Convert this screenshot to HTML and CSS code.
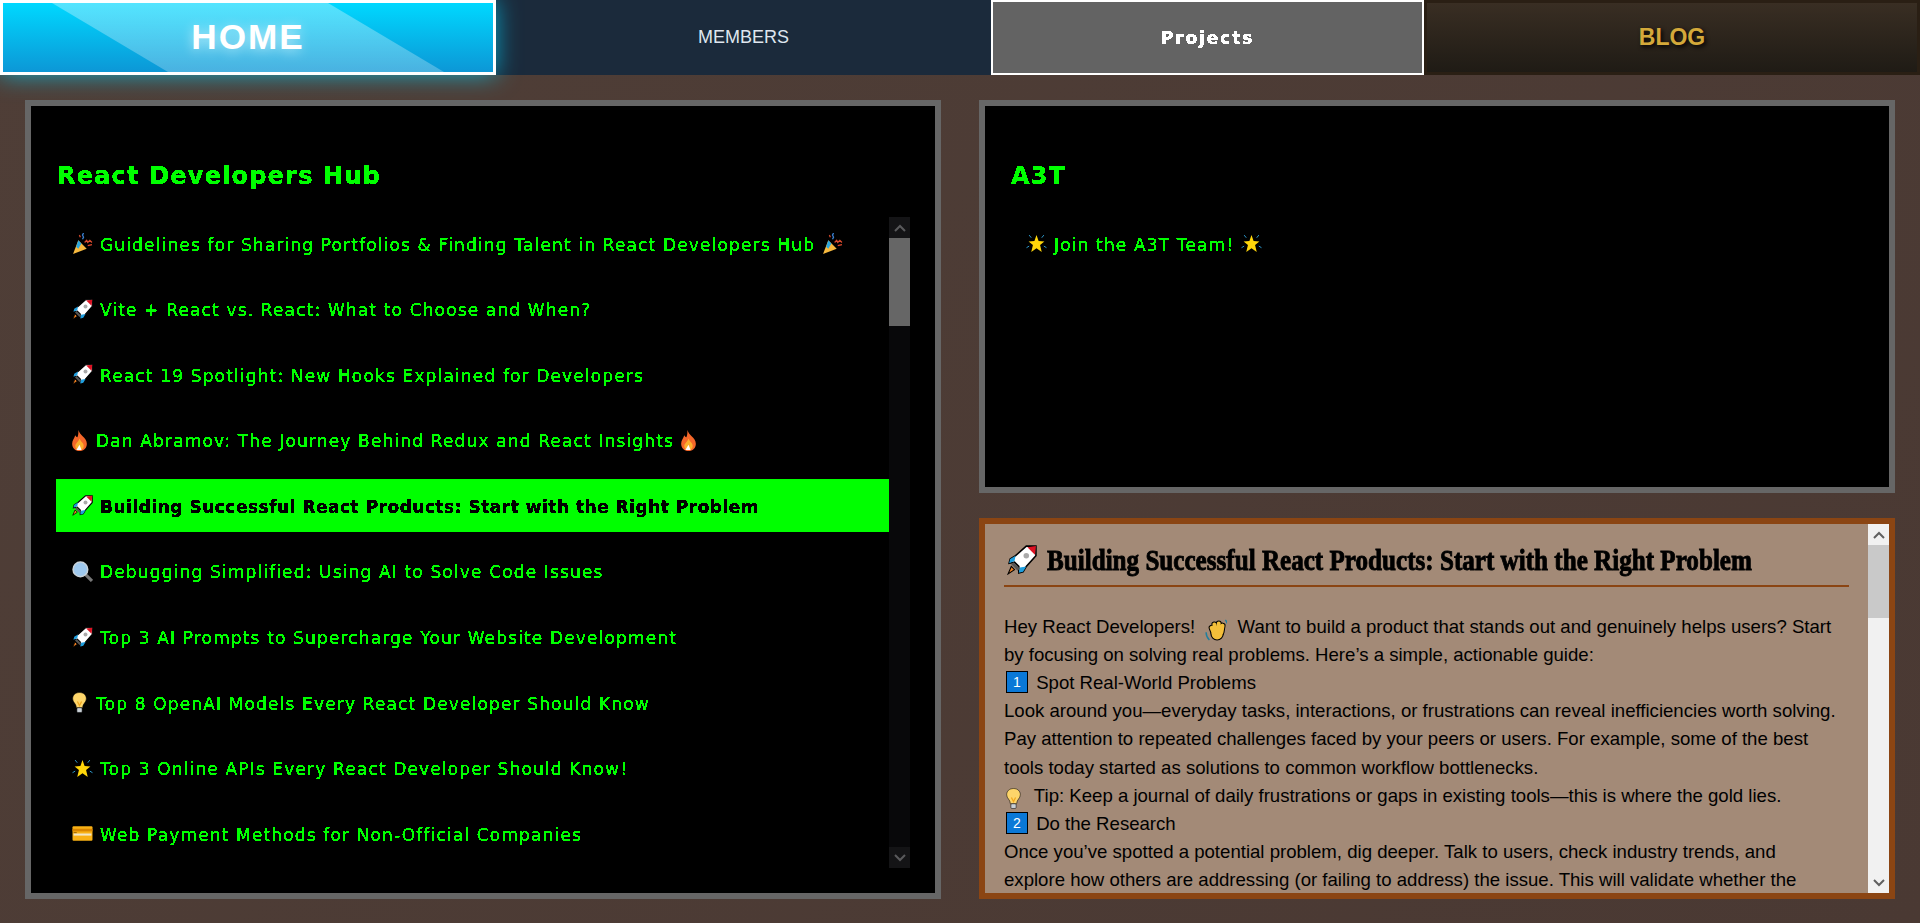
FILE: index.html
```html
<!DOCTYPE html>
<html lang="en">
<head>
    <meta charset="UTF-8">
    <meta name="viewport" content="width=device-width, initial-scale=1.0">
    <title>React Developers Hub</title>
    <link rel="stylesheet" href="styles.css">
</head>
<body>

<svg class="defs" width="0" height="0" aria-hidden="true">
    <filter id="crisp" x="0" y="0" width="100%" height="100%">
        <feComponentTransfer><feFuncA type="discrete" tableValues="0 1 1 1"/></feComponentTransfer>
    </filter>
    <symbol id="rocket" viewBox="1 1 28 28">
        <path d="M28 2 L19 2 L9 11 L4 14 L3 18 L8 17 L12 21 L12 27 L16 26 L19 21 L28 11 Z" fill="#fff" stroke="#000" stroke-width="1.5"/>
        <path d="M28 2 L20 3 L27 10 Z" fill="#dd1122"/>
        <path d="M9 11 L4 14 L3 18 L8 16 Z M19 21 L16 26 L12 27 L13 22 Z" fill="#1e9ede"/>
        <path d="M7 17 L13 23 L11 25 L5 19 Z" fill="#555"/>
        <circle cx="19" cy="11" r="2.6" fill="#aaa"/>
        <path d="M5 21 L8 24 L2 28 Z" fill="#f58220" stroke="#000" stroke-width="1"/>
    </symbol>
    <symbol id="party" viewBox="0 0 20 20">
        <path d="M6 7 L14 15 L1 20 Z" fill="#f7b93e"/>
        <path d="M6 7 L9 10 L6 15 L4 13 Z" fill="#2aa7e0"/>
        <path d="M11 0 L10 2 L11 4 L10 6" stroke="#3b82d6" stroke-width="1.2" fill="none"/>
        <path d="M12 9 L14 7 L15 9 L17 7 L19 9" stroke="#d94a2e" stroke-width="1.2" fill="none"/>
        <path d="M15 12 L19 11 M7 2 L8 4" stroke="#d94a2e" stroke-width="1.2"/>
    </symbol>
    <symbol id="fire" viewBox="3 0 14 20">
        <path d="M9 0 C10 3 11 4 13 6 C15 8 17 10 17 13 C17 17 14 20 10 20 C6 20 3 17 3 13 C3 10 5 8 6 5 C7 7 8 7 8 7 C9 5 9 2 9 0 Z" fill="#f4672a"/>
        <path d="M10 8 C11 11 14 12 14 15 C14 18 12 19 10 19 C8 19 6 18 6 15 C6 13 9 11 10 8 Z" fill="#fbb02d"/>
        <path d="M10 14 L12 19 L7 19 Z" fill="#fff"/>
    </symbol>
    <symbol id="search" viewBox="0 0 20 20">
        <path d="M12 12 L19 19" stroke="#777" stroke-width="3"/>
        <circle cx="8" cy="8" r="7" fill="#9fc9ee" stroke="#c9d3da" stroke-width="1.4"/>
    </symbol>
    <symbol id="bulb" viewBox="3 0 14 20">
        <path d="M10 .5 C14 .5 16.5 3 16.5 6.5 C16.5 10 13 11 13 15 L7 15 C7 11 3.5 10 3.5 6.5 C3.5 3 6 .5 10 .5 Z" fill="#fdd56a" stroke="#000" stroke-width=".5"/>
        <path d="M8 9 L10 13 L12 9" stroke="#f1a81e" stroke-width="1.2" fill="none"/>
        <rect x="7.5" y="15" width="5" height="4.5" rx="1" fill="#c9d0d6" stroke="#000" stroke-width=".5"/>
    </symbol>
    <symbol id="star" viewBox="0 0 20 20">
        <path d="M10 2 L12 7.6 L17.5 8 L13.4 11.4 L15 18 L10 14.6 L5 18 L6.6 11.4 L2.5 8 L8 7.6 Z" fill="#ffd60a"/>
        <path d="M3 2 L5 4.5 M17 2 L15 4.5 M.5 14 L3 12.5 M19.5 14 L17 12.5" stroke="#2f9fd6" stroke-width=".9"/>
    </symbol>
    <symbol id="card" viewBox="0 0 20 20">
        <rect x=".5" y="3" width="19" height="14" rx="1" fill="#f9b115"/>
        <rect x=".5" y="5.5" width="19" height="2.5" fill="#d98500"/>
        <rect x="1.5" y="10" width="17" height="2" fill="#f1e6c8"/>
        <rect x="1.5" y="8.6" width="3" height="1" fill="#a86a00"/>
    </symbol>
    <symbol id="hand" viewBox="0 0 20 20">
        <g fill="none" stroke="#000" stroke-width="5.4" stroke-linecap="round">
            <path d="M8 13 L6 8 M10 12 L8.5 5 M12.5 11 L12.5 4 M15 12 L16 6"/>
        </g>
        <circle cx="11" cy="13.5" r="5.6" fill="#f4bf3a" stroke="#000" stroke-width="1"/>
        <g fill="none" stroke="#f4bf3a" stroke-width="3.6" stroke-linecap="round">
            <path d="M8 13 L6 8 M10 12 L8.5 5 M12.5 11 L12.5 4 M15 12 L16 6"/>
        </g>
        <path d="M1 12 C1 15 2 17 4 19 M18.5 1 C19.5 2 20 3 20 4" stroke="#1f7f9f" stroke-width="1.3" fill="none"/>
    </symbol>
    <symbol id="chev-up" viewBox="0 0 12 8">
        <path d="M1 7 L6 2 L11 7" fill="none" stroke="currentColor" stroke-width="2"/>
    </symbol>
    <symbol id="chev-down" viewBox="0 0 12 8">
        <path d="M1 1 L6 6 L11 1" fill="none" stroke="currentColor" stroke-width="2"/>
    </symbol>
</svg>

<nav class="nav">
    <a class="nav-home">HOME</a>
    <a class="nav-members">MEMBERS</a>
    <a class="nav-projects"><span class="pixel">Projects</span></a>
    <a class="nav-blog">BLOG</a>
</nav>

<main class="layout">
    <section class="terminal panel-left">
        <h2 class="terminal-title"><span class="pixel">React Developers Hub</span></h2>
        <div class="list-wrap">
            <ul class="post-list">
                <li class="post"><svg class="emo"><use href="#party"/></svg><span class="pixel">Guidelines for Sharing Portfolios &amp; Finding Talent in React Developers Hub</span><svg class="emo"><use href="#party"/></svg></li>
                <li class="post"><svg class="emo"><use href="#rocket"/></svg><span class="pixel">Vite + React vs. React: What to Choose and When?</span></li>
                <li class="post"><svg class="emo"><use href="#rocket"/></svg><span class="pixel">React 19 Spotlight: New Hooks Explained for Developers</span></li>
                <li class="post"><svg class="emo emo-narrow"><use href="#fire"/></svg><span class="pixel">Dan Abramov: The Journey Behind Redux and React Insights</span><svg class="emo emo-narrow"><use href="#fire"/></svg></li>
                <li class="post active"><svg class="emo"><use href="#rocket"/></svg><span class="pixel">Building Successful React Products: Start with the Right Problem</span></li>
                <li class="post"><svg class="emo"><use href="#search"/></svg><span class="pixel">Debugging Simplified: Using AI to Solve Code Issues</span></li>
                <li class="post"><svg class="emo"><use href="#rocket"/></svg><span class="pixel">Top 3 AI Prompts to Supercharge Your Website Development</span></li>
                <li class="post"><svg class="emo emo-narrow"><use href="#bulb"/></svg><span class="pixel">Top 8 OpenAI Models Every React Developer Should Know</span></li>
                <li class="post"><svg class="emo"><use href="#star"/></svg><span class="pixel">Top 3 Online APIs Every React Developer Should Know!</span></li>
                <li class="post"><svg class="emo"><use href="#card"/></svg><span class="pixel">Web Payment Methods for Non-Official Companies</span></li>
            </ul>
            <div class="bar bar-dark">
                <span class="bar-btn"><svg class="chev"><use href="#chev-up"/></svg></span>
                <span class="bar-track"><span class="bar-thumb thumb-dark"></span></span>
                <span class="bar-btn"><svg class="chev"><use href="#chev-down"/></svg></span>
            </div>
        </div>
    </section>

    <div class="right-col">
        <section class="terminal panel-top">
            <h2 class="terminal-title"><span class="pixel">A3T</span></h2>
            <ul class="post-list">
                <li class="post"><svg class="emo"><use href="#star"/></svg><span class="pixel">Join the A3T Team!</span><svg class="emo"><use href="#star"/></svg></li>
            </ul>
        </section>

        <section class="article">
            <div class="article-body">
                <h1 class="article-title"><svg class="emo-big"><use href="#rocket"/></svg><span class="article-title-text">Building Successful React Products: Start with the Right Problem</span></h1>
                <p class="article-text">Hey React Developers! <svg class="emo-inline"><use href="#hand"/></svg> Want to build a product that stands out and genuinely helps users? Start<br>
                by focusing on solving real problems. Here’s a simple, actionable guide:<br>
                <span class="keycap">1</span> Spot Real-World Problems<br>
                Look around you—everyday tasks, interactions, or frustrations can reveal inefficiencies worth solving.<br>
                Pay attention to repeated challenges faced by your peers or users. For example, some of the best<br>
                tools today started as solutions to common workflow bottlenecks.<br>
                <svg class="emo-bulb"><use href="#bulb"/></svg> Tip: Keep a journal of daily frustrations or gaps in existing tools—this is where the gold lies.<br>
                <span class="keycap">2</span> Do the Research<br>
                Once you’ve spotted a potential problem, dig deeper. Talk to users, check industry trends, and<br>
                explore how others are addressing (or failing to address) the issue. This will validate whether the</p>
            </div>
            <div class="bar bar-light">
                <span class="bar-btn"><svg class="chev"><use href="#chev-up"/></svg></span>
                <span class="bar-track"><span class="bar-thumb thumb-light"></span></span>
                <span class="bar-btn"><svg class="chev"><use href="#chev-down"/></svg></span>
            </div>
        </section>
    </div>
</main>

</body>
</html>
```

FILE: styles.css
```css
html, body {
    height: 100%;
}
body {
    margin: 0;
    background: linear-gradient(135deg, #4f3e37, #4a3933);
    font-family: "Liberation Sans", Arial, sans-serif;
    overflow: hidden;
}
.defs {
    display: block;
    height: 0;
}
.pixel {
    font-family: "DejaVu Sans", sans-serif;
    filter: url(#crisp);
}

/* top nav */
.nav {
    display: grid;
    grid-template-columns: 496px 495px 433px 496px;
    height: 75px;
}
.nav a {
    display: flex;
    align-items: center;
    justify-content: center;
    box-sizing: border-box;
}
.nav-home {
    position: relative;
    z-index: 2;
    border: 3px solid #fff;
    background: linear-gradient(#00d8ff, #0c97d6);
    box-shadow: 0 0 25px rgba(0, 212, 255, 0.7);
    color: #fff;
    font-size: 35.2px;
    font-weight: bold;
    letter-spacing: 2px;
    padding-bottom: 2px;
    text-shadow: 0 2px 12px rgba(255, 255, 255, 0.6);
}
.nav-home::before {
    content: "";
    position: absolute;
    inset: 0;
    background: linear-gradient(rgba(255, 255, 255, 0.33), rgba(255, 255, 255, 0.25));
    clip-path: polygon(49px 0, 325px 0, 441px 100%, 165px 100%);
}
.nav-members {
    background-color: #1b2a3b;
    color: #dfe6ef;
    font-size: 18px;
}
.nav-projects {
    border: 2px solid #fff;
    background-color: #636363;
    color: #fff;
    font-size: 17px;
    font-weight: bold;
    letter-spacing: 1.9px;
}
.nav-blog {
    border: 3px solid #2a1f14;
    background: linear-gradient(#392e23, #1f1b15);
    color: #d4a93a;
    font-size: 23px;
    font-weight: bold;
    text-shadow: 2px 2px 4px #000;
}

/* panels */
.layout {
    display: grid;
    grid-template-columns: 916px 916px;
    column-gap: 38px;
    padding: 25px 25px 0;
    height: 799px;
}
.terminal {
    box-sizing: border-box;
    display: flex;
    flex-direction: column;
    border: 6px solid #666;
    background-color: #000;
    color: #00ff00;
    padding: 0 25px;
    min-height: 0;
}
.terminal-title {
    margin: 0;
    padding-left: 1px;
    height: 111px;
    line-height: 139px;
    font-size: 24px;
    letter-spacing: 1.2px;
    flex-shrink: 0;
}
.list-wrap {
    display: flex;
    height: 651px;
}
.post-list {
    flex: 1;
    display: flex;
    flex-direction: column;
    gap: 12.6px;
    list-style: none;
    margin: 0;
    padding: 0;
    overflow: hidden;
}
.post {
    display: flex;
    align-items: center;
    gap: 7px;
    flex-shrink: 0;
    box-sizing: border-box;
    height: 53px;
    padding: 2px 0 0 16px;
    font-size: 17px;
    letter-spacing: 1.15px;
    white-space: nowrap;
}
.post.active {
    background-color: #00ff00;
    color: #000;
    font-weight: bold;
    letter-spacing: 0.5px;
}
.emo {
    width: 21px;
    height: 21px;
    flex-shrink: 0;
    margin-top: -2px;
}
.emo-narrow {
    width: 15px;
    margin-right: 2px;
}

/* fake scrollbars */
.bar {
    display: flex;
    flex-direction: column;
    flex-shrink: 0;
    width: 21px;
}
.bar-btn {
    display: flex;
    align-items: center;
    justify-content: center;
    height: 21px;
    flex-shrink: 0;
}
.bar-track {
    display: block;
    flex: 1;
}
.bar-thumb {
    display: block;
    height: 88px;
}
.chev {
    width: 12px;
    height: 8px;
}
.bar-dark {
    background-color: #08080a;
}
.bar-dark .bar-btn {
    background-color: #141416;
    color: #5a5a5c;
}
.thumb-dark {
    background-color: #666;
}
.bar-light {
    background-color: #f1f1f1;
}
.bar-light .bar-btn {
    color: #606060;
}
.thumb-light {
    height: 73px;
    background-color: #c9c9c9;
}

/* right column */
.right-col {
    display: flex;
    flex-direction: column;
    gap: 25px;
    min-height: 0;
}
.panel-top {
    height: 393px;
    flex-shrink: 0;
}
.article {
    box-sizing: border-box;
    display: flex;
    flex: 1;
    min-height: 0;
    border: 6px solid #8b4513;
    background-color: #a38a77;
    color: #000;
}
.article-body {
    flex: 1;
    min-width: 0;
    padding: 0 19px;
    overflow: hidden;
}
.article-title {
    display: flex;
    align-items: center;
    gap: 10px;
    box-sizing: border-box;
    margin: 0 0 25.5px;
    padding-top: 10px;
    height: 63px;
    border-bottom: 2px solid #8b4513;
    font-family: "Liberation Serif", serif;
    font-size: 30px;
    font-weight: bold;
    white-space: nowrap;
}
.article-title-text {
    display: inline-block;
    transform: scaleX(0.837);
    transform-origin: left center;
    -webkit-text-stroke: 0.9px #000;
}
.emo-big {
    width: 30px;
    height: 30px;
    flex-shrink: 0;
    margin-left: 3px;
}
.article-text {
    margin: 0;
    font-size: 18.6px;
    line-height: 28.2px;
    white-space: nowrap;
}
.emo-inline {
    width: 22px;
    height: 22px;
    margin: -4px 5px;
    vertical-align: -4px;
}
.emo-bulb {
    width: 15px;
    height: 21px;
    margin: -4px 8px -4px 2px;
    vertical-align: -3px;
}
.keycap {
    display: inline-block;
    box-sizing: border-box;
    width: 22px;
    height: 22px;
    margin: -4px 3px -4px 2px;
    border: 1px solid #000;
    background-color: #0a78d7;
    color: #fff;
    font-size: 14px;
    line-height: 20px;
    text-align: center;
    vertical-align: 2px;
}
```
